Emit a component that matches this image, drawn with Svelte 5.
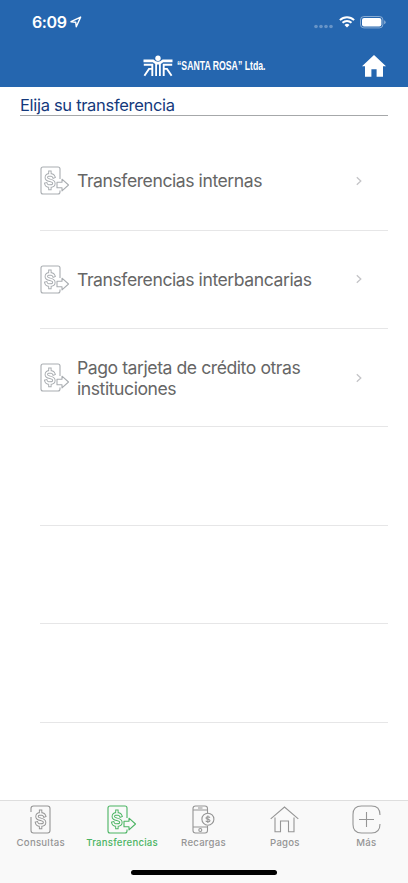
<div class="screen">
  <header class="header">
    <div class="status-bar">
      <div class="clock">
        <span>6:09</span>
        <svg width="12" height="12" viewBox="0 0 12 12">
          <path d="M1 5.7 L10.6 1.1 L6.3 10.8 L5.7 6.2 Z" fill="none" stroke="#fff" stroke-width="1.4" stroke-linejoin="round" />
        </svg>
      </div>
      <div class="indicators">
        <svg width="20" height="5" viewBox="0 0 20 5" fill="#fff" opacity="0.3">
          {#each [2, 7, 12, 17] as cx}
            <circle {cx} cy="2.5" r="1.8" />
          {/each}
        </svg>
        <svg class="wifi" width="16" height="12" viewBox="0 0 16 12" fill="none" stroke="#fff">
          <path d="M0.9 4.1 A10.2 10.2 0 0 1 15.1 4.1" stroke-width="2" />
          <path d="M3.5 6.8 A6.5 6.5 0 0 1 12.5 6.8" stroke-width="1.9" />
          <path d="M5.5 8.9 A3.6 3.6 0 0 1 10.5 8.9 L8 11.4 Z" fill="#fff" stroke="none" />
        </svg>
        <svg class="battery" width="26" height="13" viewBox="0 0 26 13">
          <rect x="0.5" y="0.5" width="22.4" height="11.4" rx="3.4" fill="none" stroke="#fff" stroke-opacity="0.45" />
          <rect x="2" y="2" width="19.4" height="8.4" rx="2" fill="#fff" />
          <path d="M24.2 4.2 Q25.6 4.8 25.6 6.2 Q25.6 7.6 24.2 8.2 Z" fill="#fff" opacity="0.5" />
        </svg>
      </div>
    </div>

    <div class="nav-bar">
      <div class="brand">
        <svg width="30" height="22" viewBox="0 0 30 22" fill="#fff">
          <circle cx="15" cy="3.3" r="2.7" />
          <path d="M0.5 4.400 H10.500 Q15 9 19.500 4.400 H29.500 V7.200 H20.200 L17.800 9 V21 H16 V9.400 H14 V21 H12.200 V9 L9.800 7.200 H0.500 Z" />
          <g fill="none" stroke="#fff" stroke-width="1.900">
            <path d="M0.800 9.800 H9.300 V21" />
            <path d="M29.200 9.800 H20.700 V21" />
            <path d="M9 13.900 H6 L1.400 20.800" />
            <path d="M21 13.900 H24 L28.600 20.800" />
          </g>
        </svg>
        <span class="brand-name">“SANTA ROSA” Ltda.</span>
      </div>
      <button class="home-btn" aria-label="Inicio">
        <svg width="24" height="22" viewBox="0 0 24 22" fill="#fff">
          <path d="M12 0 L24 11.200 H21 V21.700 H14.600 V14.300 H9.400 V21.700 H3 V11.200 H0 Z" />
        </svg>
      </button>
    </div>
  </header>

  <main class="content">
    <h1>Elija su transferencia</h1>
    <ul class="list">
      {#each rows as label}
        <li class="row">
          {#if label}
            {@render transferIcon('#a9adb1', '#fff')}
            <span class="row-label">{label}</span>
            <svg class="chevron" width="6" height="10" viewBox="0 0 6 10" fill="none" stroke="#c4c4c7" stroke-width="1.300">
              <path d="M0.800 1.200 L4.800 5 L0.800 8.800" />
            </svg>
          {/if}
        </li>
      {/each}
    </ul>
  </main>

  <nav class="tab-bar">
    <div class="tabs">
      {#each tabs as tab}
        <button class="tab" class:active={tab.id === current} onclick={() => (current = tab.id)}>
          {#if tab.id === 'transferencias'}
            {@render transferIcon('currentColor', '#f9f9f9')}
          {:else}
            <svg width="29" height="29" viewBox="0 0 29 29" fill="none" stroke="currentColor" stroke-width="1.100">
              {#if tab.id === 'consultas'}
                <path d="M5 12 V25.500 Q5 28 7.500 28 H21.500 Q24 28 24 25.500 V3.500 Q24 1 21.500 1 H7.500 Q5 1 5 3.500 V7" />
                <g transform="translate(4.700 0)">{@render dollar('currentColor', '#f9f9f9')}</g>
              {:else if tab.id === 'recargas'}
                <path d="M18.500 10 V3.500 Q18.500 1 16 1 H6.500 Q4 1 4 3.500 V25.500 Q4 28 6.500 28 H16 Q18.500 28 18.500 25.500 V21 M4 5 H18.500 M4 22 H18.500 M9 3 H13.500" />
                <circle cx="11.300" cy="25" r="1.500" />
                <circle cx="18.900" cy="14.200" r="6" fill="#f9f9f9" />
                <path d="M20.900 12.800 Q20.500 11.800 18.900 11.800 Q17 11.800 17 13 Q17 14 18.900 14.300 Q21 14.600 21 15.700 Q21 16.800 18.900 16.800 Q17.200 16.800 16.800 15.700 M18.900 10.600 V18" />
              {:else if tab.id === 'pagos'}
                <path d="M0.700 13.800 L14.500 2 L28.300 13.800 M5 12.500 V26.700 H10.500 V16 H18.500 V26.700 H24 V12.500" />
              {:else}
                <path d="M28 10 Q28 1 19.500 1 H9.500 Q1 1 1 9.500 V19.500 Q1 28 9.500 28 H19.500 Q28 28 28 19" />
                <path d="M14.500 7 V22 M7 14.500 H22" />
              {/if}
            </svg>
          {/if}
          <span>{tab.label}</span>
        </button>
      {/each}
    </div>
    <div class="home-indicator"></div>
  </nav>
</div>

<!-- Hollow dollar sign: wide stroke with a narrower one in the background colour on top -->
{#snippet dollar(color: string, bg: string)}
  {#each [{ stroke: color, width: 3.4 }, { stroke: bg, width: 1.5 }] as pass}
    <path
      d="M13.800 10.800 Q13 8.700 9.900 8.700 Q6.300 8.700 6.300 11.500 Q6.300 13.800 9.900 14.300 Q13.900 15 13.900 17.500 Q13.900 20.200 9.900 20.200 Q6.600 20.200 6 18 M9.900 6.300 V9 M9.900 20 V22.500"
      fill="none"
      stroke={pass.stroke}
      stroke-width={pass.width}
      stroke-linecap="square"
    />
  {/each}
{/snippet}

{#snippet transferIcon(color: string, bg: string)}
  <svg class="transfer-icon" width="30" height="29" viewBox="0 0 30 29" fill="none" stroke={color} stroke-width="1.100">
    <path d="M20 13 V3 Q20 1 18 1 H3 Q1 1 1 3 V26 Q1 28 3 28 H18 Q20 28 20 26 V24.500" />
    {@render dollar(color, bg)}
    <path d="M17 16.300 H22 V13.200 L28.500 19 L22 24.800 V21.700 H17 Z" fill={bg} stroke-linejoin="round" />
  </svg>
{/snippet}

<script lang="ts">
  const rows = [
    'Transferencias internas',
    'Transferencias interbancarias',
    'Pago tarjeta de crédito otras instituciones',
    '',
    '',
    '',
  ]

  const tabs = [
    { id: 'consultas', label: 'Consultas' },
    { id: 'transferencias', label: 'Transferencias' },
    { id: 'recargas', label: 'Recargas' },
    { id: 'pagos', label: 'Pagos' },
    { id: 'mas', label: 'Más' },
  ]

  let current = $state('transferencias')
</script>

<style>
  :global(body) {
    margin: 0;
  }
  .screen {
    display: flex;
    flex-direction: column;
    height: 883px;
    background: #fff;
    font-family: Inter, 'Liberation Sans', sans-serif;
    overflow: hidden;
  }
  svg {
    display: block;
    flex: none;
  }
  button {
    background: none;
    border: none;
    padding: 0;
    font: inherit;
  }
  .header {
    height: 87px;
    flex: none;
    background: #2566af;
    color: #fff;
  }
  .status-bar {
    display: flex;
    justify-content: space-between;
    align-items: center;
    height: 44px;
    padding: 0 22px 0 32px;
  }
  .clock {
    display: flex;
    align-items: center;
    gap: 3px;
    font-size: 16px;
    font-weight: 600;
    letter-spacing: -0.4px;
  }
  .indicators {
    display: flex;
    align-items: center;
    gap: 5px;
  }
  .indicators svg:first-child {
    margin-top: 9px;
  }
  .nav-bar {
    display: grid;
    grid-template-columns: 1fr auto 1fr;
    align-items: center;
    height: 43px;
    padding: 0 22px;
  }
  .brand {
    grid-column: 2;
    display: flex;
    align-items: center;
    gap: 4px;
  }
  .brand-name {
    width: 88px;
    font-family: 'Liberation Sans', sans-serif;
    font-size: 12px;
    font-weight: 700;
    line-height: 14px;
    white-space: nowrap;
    transform: scaleX(0.725);
    transform-origin: left center;
  }
  .home-btn {
    justify-self: end;
  }
  .content {
    flex: 1;
    padding: 0 20px;
  }
  h1 {
    height: 28px;
    margin: 0 0 16.2px;
    border-bottom: 1px solid #a6a8aa;
    color: #14397c;
    font-size: 16.5px;
    font-weight: 400;
    line-height: 36px;
    letter-spacing: -0.31px;
  }
  .list {
    list-style: none;
    margin: 0;
    padding: 0 0 0 20px;
  }
  .row {
    display: flex;
    align-items: center;
    box-sizing: border-box;
    height: 98.4px;
    padding-right: 26px;
    border-bottom: 1px solid #e6e6e7;
  }
  .row-label {
    flex: 1;
    margin-left: 7px;
    color: #666;
    font-size: 17.6px;
    line-height: 21px;
    letter-spacing: -0.44px;
  }
  .tab-bar {
    display: flex;
    flex-direction: column;
    align-items: center;
    box-sizing: border-box;
    height: 83px;
    flex: none;
    background: #f9f9f9;
    border-top: 1px solid #dedede;
  }
  .tabs {
    display: grid;
    grid-template-columns: repeat(5, 1fr);
    box-sizing: border-box;
    width: 100%;
    height: 69px;
    padding-right: 1px;
  }
  .tab {
    display: flex;
    flex-direction: column;
    align-items: center;
    padding-top: 4px;
    color: #959595;
    font-size: 9.6px;
    font-weight: 500;
    line-height: 12px;
    letter-spacing: 0.25px;
    gap: 3px;
  }
  .tab.active {
    color: #4bb463;
  }
  .home-indicator {
    width: 146px;
    height: 5px;
    border-radius: 3px;
    background: #000;
  }
</style>
